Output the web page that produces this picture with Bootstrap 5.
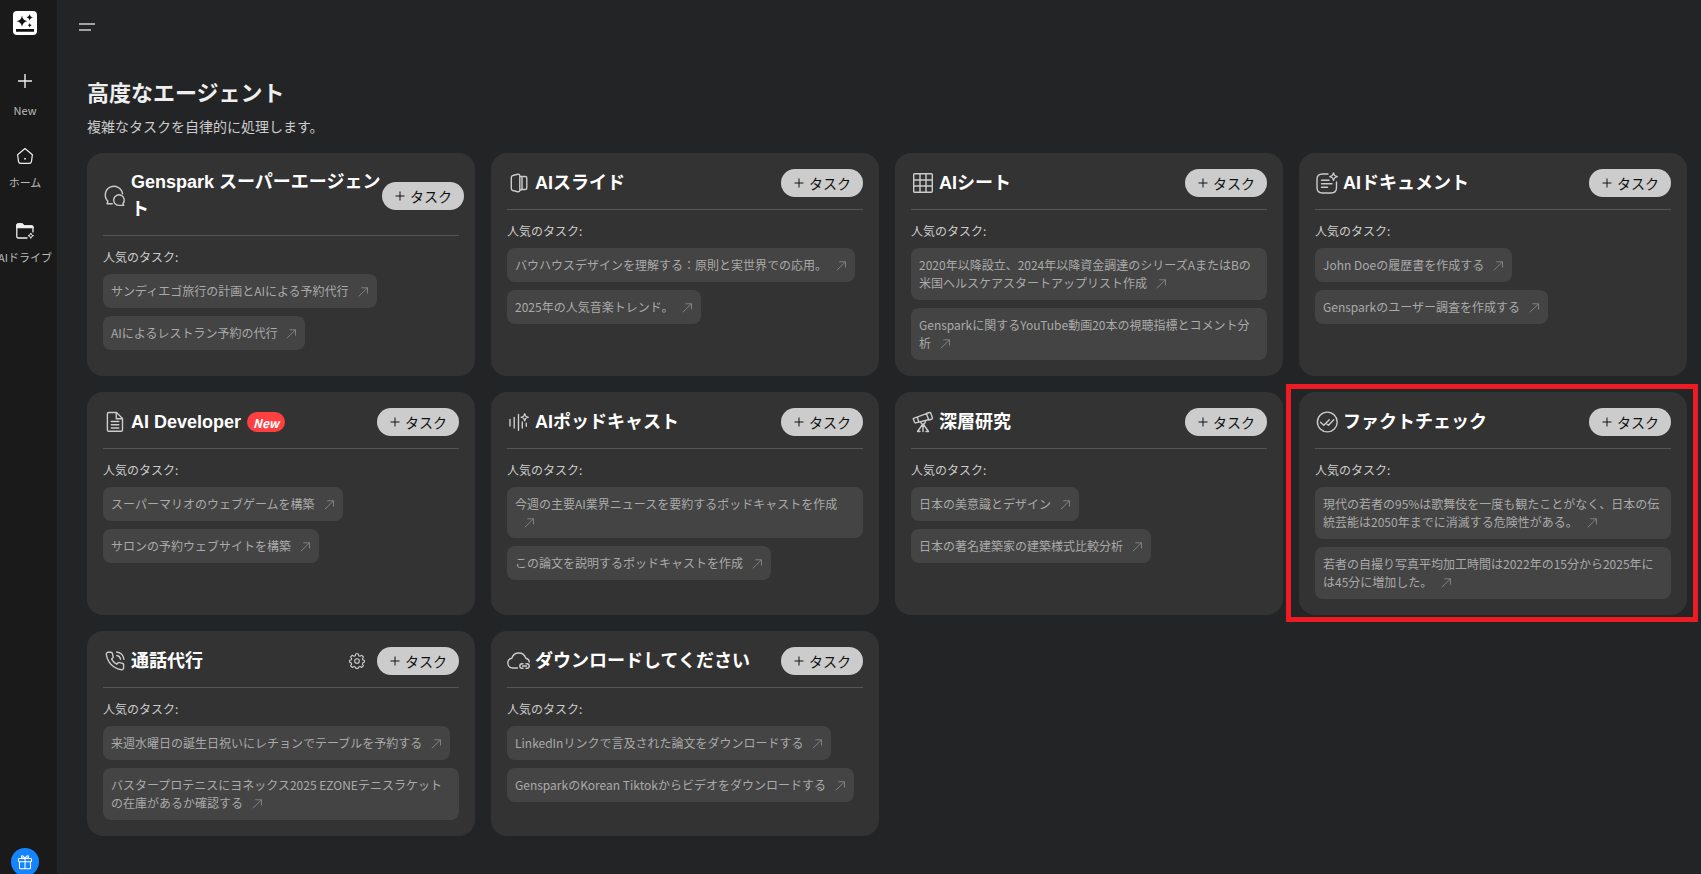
<!DOCTYPE html>
<html lang="ja">
<head>
<meta charset="utf-8">
<meta name="viewport" content="width=device-width, initial-scale=1">
<title>高度なエージェント</title>
<link href="https://cdn.jsdelivr.net/npm/bootstrap@5.3.0/dist/css/bootstrap.min.css" rel="stylesheet">
<style>
  body { background: #232425; color: #eee; font-family: "Noto Sans CJK JP", sans-serif; height: 100vh; overflow: hidden; line-height: 1.5; }
  svg { display: block; fill: none; stroke: currentColor; flex: none; }
  .side { width: 57px; padding: 11px 7px 0 0; background: #1a1a1a; color: #bbb; font-size: 11px; height: 100vh; overflow: hidden; }
  .side-item { height: 75px; line-height: 16px; white-space: nowrap; }
  .side-item svg { color: #eee; margin-bottom: 11px; }
  .side-item .icon-low { margin-bottom: 8px; }
  .side-list { margin-top: 36px; }
  .gift { width: 28px; height: 28px; background: #1484ff; color: #fff; margin-bottom: -2px; flex: none; }
  .page { padding: 22px 14px 0 30px; }
  .menu-icon { margin-left: -8px; color: #ccc; }
  .page h1 { font-size: 22px; line-height: 33px; margin: 43px 0 0; font-weight: 700; }
  .lead-in { font-size: 14px; line-height: 21px; margin: 8px 0 16px; color: #ccc; }
  .agents { display: grid; grid-template-columns: repeat(4, 388px); gap: 16px; }
  .agent { background: #333; border: 0; border-radius: 16px; padding: 16px; color: #ccc; font-size: 12px; line-height: 18px; }
  .agent-head { padding-bottom: 12px; border-bottom: 1px solid #555; margin-bottom: 12px; gap: 4px; min-height: 41px; }
  .agent-head > svg { width: 24px; height: 24px; stroke-width: 1.4; stroke-linecap: round; stroke-linejoin: round; }
  .agent-head h2 { font: 700 18px/27px "Liberation Sans", "Noto Sans CJK JP", sans-serif; color: #fff; margin: 0; }
  .agent-head .title-wrap { width: 251px; flex: none; margin-right: -4px; }
  .btn-task { --bs-btn-color: #111; --bs-btn-bg: #ccc; --bs-btn-padding-x: 12px; --bs-btn-padding-y: 0; --bs-btn-border-width: 0; --bs-btn-font-size: 14px; --bs-btn-line-height: 28px; --bs-btn-hover-bg: #ddd; width: 82px; height: 28px; flex: none; white-space: nowrap; }
  .tasks { gap: 8px; margin-top: 8px; }
  .chip { background: #444; color: #aaa; border-radius: 8px; padding: 8px; }
  .chip svg { display: inline-block; width: 12px; height: 12px; margin-left: 8px; vertical-align: -2px; stroke: #888; }
  .chip-short { height: 51px; }
  .new-tag { background: #ff4040; border-radius: 10px; font: italic 700 12px/20px "Noto Sans CJK JP", sans-serif; width: 38px; height: 20px; padding: 1px 0 0; margin-left: 2px; }
  .gear { margin-right: 8px; }
  .agent-head > svg.gear { width: 16px; height: 16px; stroke-width: 1.1; }
  .marked::after { content: ""; position: absolute; inset: -8px -11px -7px -13px; border: 5px solid #ed1c24; }
</style>
</head>
<body class="d-flex">
<svg width="0" height="0" class="position-absolute">
  <symbol id="arrow" viewBox="0 0 12 12"><path d="M1.800 10.300 10.400 1.900M4.300 1.800h6.200v5.700" stroke-width=".9"/></symbol>
  <symbol id="plus" viewBox="0 0 12 12"><path d="M6 1.500v9M1.500 6h9" stroke-width="1"/></symbol>
</svg>

<aside class="side d-flex flex-column align-items-center flex-shrink-0">
  <svg class="mx-auto" width="24" height="24" viewBox="0 0 24 24"><rect width="24" height="24" rx="4" fill="#fff" stroke="none"/><path fill="#111" stroke="none" d="M9 4.500q.7 5 5.500 5.700q-4.800.7-5.500 5.600q-.7-4.900-5.500-5.600q4.800-.7 5.500-5.700zM16.700 3q.4 3 3.300 3.500q-2.900.4-3.300 3.400q-.4-3-3.300-3.400q2.900-.5 3.300-3.500zM16.700 12q.3 2 2 2.300q-1.700.3-2 2.200q-.3-1.900-2-2.200q1.700-.3 2-2.300zM3 18h18v2.800H3z"/></svg>
  <nav class="side-list d-flex flex-column align-items-center flex-grow-1">
    <div class="side-item d-flex flex-column align-items-center"><svg width="20" height="20" viewBox="0 0 20 20" stroke-width="1.400"><path d="M10 3v14M3 10h14"/></svg>New</div>
    <div class="side-item d-flex flex-column align-items-center"><svg class="icon-low" width="20" height="20" viewBox="0 0 20 20" stroke-width="1.200"><path d="m10 2.500-7.400 6.200.9 6.600q.3 2 2.300 2h8.400q2 0 2.300-2l.9-6.600z" stroke-linejoin="round"/><path d="M10 12v1.500" stroke-width="1.700"/></svg>ホーム</div>
    <div class="side-item d-flex flex-column align-items-center"><svg class="icon-low" width="20" height="20" viewBox="0 0 20 20" stroke-width="1.300"><path d="M12.500 17H3.300q-1.500 0-1.500-1.500v-11Q1.800 3 3.300 3H7l2 2h7.500q1.500 0 1.500 1.500v5"/><path d="M1.800 6.700V4.500Q1.800 3 3.300 3H7l2 2h7.500q1.500 0 1.500 1.700z" fill="currentColor"/><path d="m15.800 12 .8 1.900 1.900.8-1.900.8-.8 1.900-.8-1.900-1.900-.8 1.900-.8z" stroke-width="1"/></svg>AIドライブ</div>
  </nav>
  <div class="gift rounded-circle d-flex justify-content-center align-items-center"><svg width="16" height="16" viewBox="0 0 16 16" stroke-width="1.100"><rect x="1.500" y="4.500" width="13" height="3.200" rx=".8"/><path d="M2.500 7.700v6q0 1 1 1h9q1 0 1-1v-6M8 4.500v10.200M8 4.500q-4 0-3.500-2Q5.500.3 8 4.500q2.500-4.200 3.500-2 .5 2-3.500 2z"/></svg></div>
</aside>

<main class="page flex-grow-1">
  <svg class="menu-icon" width="16" height="10" viewBox="0 0 16 10" stroke-width="1.700"><path d="M0 2h16M0 8h12"/></svg>
  <h1>高度なエージェント</h1>
  <p class="lead-in">複雑なタスクを自律的に処理します。</p>
  <div class="agents">

    <section class="agent card">
      <div class="agent-head d-flex align-items-center">
        <svg viewBox="0 0 24 24"><path d="M19.600 9.800A8.700 8.700 0 1 0 4.900 17.200L4 19.700H9.300"/><path d="M20 19.500a5.300 5.300 0 1 0-4.200 1.900H20.700z"/></svg>
        <h2 class="title-wrap">Genspark スーパーエージェント</h2>
        <button class="btn btn-task rounded-pill d-flex align-items-center gap-1"><svg width="12" height="12"><use href="#plus"/></svg>タスク</button>
      </div>
      <div>人気のタスク:</div>
      <div class="tasks d-flex flex-column align-items-start">
        <div class="chip">サンディエゴ旅行の計画とAIによる予約代行<svg><use href="#arrow"/></svg></div>
        <div class="chip">AIによるレストラン予約の代行<svg><use href="#arrow"/></svg></div>
      </div>
    </section>

    <section class="agent card">
      <div class="agent-head d-flex align-items-center">
        <svg viewBox="0 0 24 24"><path d="M4.300 6.500q0-1.700 1.500-2l5-1.200q2-.3 2 1.500v14.400q0 1.800-2 1.500l-5-1.200q-1.500-.3-1.500-2zM12.800 5.500h5.500q1.500 0 1.500 1.500v10q0 1.500-1.500 1.500h-2.500q-1.500 0-3 .8M15 5.500v13"/></svg>
        <h2>AIスライド</h2>
        <button class="btn btn-task rounded-pill d-flex align-items-center gap-1 ms-auto"><svg width="12" height="12"><use href="#plus"/></svg>タスク</button>
      </div>
      <div>人気のタスク:</div>
      <div class="tasks d-flex flex-column align-items-start">
        <div class="chip">バウハウスデザインを理解する：原則と実世界での応用。<svg><use href="#arrow"/></svg></div>
        <div class="chip">2025年の人気音楽トレンド。<svg><use href="#arrow"/></svg></div>
      </div>
    </section>

    <section class="agent card">
      <div class="agent-head d-flex align-items-center">
        <svg viewBox="0 0 24 24"><rect x="2.700" y="2.700" width="18.600" height="18.600" rx="1"/><path d="M9 3v18M15 3v18M3 9h18M3 15h18"/></svg>
        <h2>AIシート</h2>
        <button class="btn btn-task rounded-pill d-flex align-items-center gap-1 ms-auto"><svg width="12" height="12"><use href="#plus"/></svg>タスク</button>
      </div>
      <div>人気のタスク:</div>
      <div class="tasks d-flex flex-column align-items-start">
        <div class="chip">2020年以降設立、2024年以降資金調達のシリーズAまたはBの米国ヘルスケアスタートアップリスト作成<svg><use href="#arrow"/></svg></div>
        <div class="chip">Gensparkに関するYouTube動画20本の視聴指標とコメント分析<svg><use href="#arrow"/></svg></div>
      </div>
    </section>

    <section class="agent card">
      <div class="agent-head d-flex align-items-center">
        <svg viewBox="0 0 24 24"><path d="M13 3H7.500Q2 3 2 8.500v8Q2 22 7.500 22H16q5.500 0 5.500-5.500V11M6.500 9.300h7.500M6.500 12.700h10.500M6.500 16.200h6"/><path d="m18.500 1.800 1.100 2.700 2.700 1.100-2.700 1.100-1.100 2.700-1.100-2.700-2.700-1.100 2.700-1.100z" stroke-width="1.200"/></svg>
        <h2>AIドキュメント</h2>
        <button class="btn btn-task rounded-pill d-flex align-items-center gap-1 ms-auto"><svg width="12" height="12"><use href="#plus"/></svg>タスク</button>
      </div>
      <div>人気のタスク:</div>
      <div class="tasks d-flex flex-column align-items-start">
        <div class="chip">John Doeの履歴書を作成する<svg><use href="#arrow"/></svg></div>
        <div class="chip">Gensparkのユーザー調査を作成する<svg><use href="#arrow"/></svg></div>
      </div>
    </section>

    <section class="agent card">
      <div class="agent-head d-flex align-items-center">
        <svg viewBox="0 0 24 24"><path d="M5.500 2.500h8l6 6v11.500q0 1.300-1.300 1.300H5.700q-1.300 0-1.300-1.300v-16q0-1.500 1.100-1.500zM13.300 2.700v6h6M8.300 11.500h7.500M8.300 14.700h7.500M8.300 18h7.500"/></svg>
        <h2>AI Developer</h2>
        <span class="badge new-tag">New</span>
        <button class="btn btn-task rounded-pill d-flex align-items-center gap-1 ms-auto"><svg width="12" height="12"><use href="#plus"/></svg>タスク</button>
      </div>
      <div>人気のタスク:</div>
      <div class="tasks d-flex flex-column align-items-start">
        <div class="chip">スーパーマリオのウェブゲームを構築<svg><use href="#arrow"/></svg></div>
        <div class="chip">サロンの予約ウェブサイトを構築<svg><use href="#arrow"/></svg></div>
      </div>
    </section>

    <section class="agent card">
      <div class="agent-head d-flex align-items-center">
        <svg viewBox="0 0 24 24"><path d="M3 9.500v6.500M7.200 7.500v10.500M11.500 4.500v15.800M15.300 12v6M19.300 13.300v3"/><path d="m17.700 3.600 1 2.700 2.700 1-2.700 1-1 2.700-1-2.700-2.700-1 2.700-1z" stroke-width="1.200"/></svg>
        <h2>AIポッドキャスト</h2>
        <button class="btn btn-task rounded-pill d-flex align-items-center gap-1 ms-auto"><svg width="12" height="12"><use href="#plus"/></svg>タスク</button>
      </div>
      <div>人気のタスク:</div>
      <div class="tasks d-flex flex-column align-items-start">
        <div class="chip chip-short">今週の主要AI業界ニュースを要約するポッドキャストを作成<svg><use href="#arrow"/></svg></div>
        <div class="chip">この論文を説明するポッドキャストを作成<svg><use href="#arrow"/></svg></div>
      </div>
    </section>

    <section class="agent card">
      <div class="agent-head d-flex align-items-center">
        <svg viewBox="0 0 24 24"><path d="m2.500 8.300 13-4.600 2.200 6-13 3.200q-.8.200-1.100-.6l-1.300-3.200q-.2-.6.200-.8zM15.300 3.500l3.300-1q.8-.2 1.100.6l1.700 4.700q.3.900-.5 1.200l-3 1M6.300 7.200l1.500 4.800M12 14.500v7M11.500 14.500l-5 7H9M12.500 14.500l5 7H15M9.800 12q.4 2.300 2.200 2.300t2.400-3"/></svg>
        <h2>深層研究</h2>
        <button class="btn btn-task rounded-pill d-flex align-items-center gap-1 ms-auto"><svg width="12" height="12"><use href="#plus"/></svg>タスク</button>
      </div>
      <div>人気のタスク:</div>
      <div class="tasks d-flex flex-column align-items-start">
        <div class="chip">日本の美意識とデザイン<svg><use href="#arrow"/></svg></div>
        <div class="chip">日本の著名建築家の建築様式比較分析<svg><use href="#arrow"/></svg></div>
      </div>
    </section>

    <section class="agent card marked">
      <div class="agent-head d-flex align-items-center">
        <svg viewBox="0 0 24 24"><circle cx="12.300" cy="12" r="9.900"/><path d="m5.500 12.300 3.300 3 5.500-5.600M12 14.200l1.500 1.100 5.300-5.600"/></svg>
        <h2>ファクトチェック</h2>
        <button class="btn btn-task rounded-pill d-flex align-items-center gap-1 ms-auto"><svg width="12" height="12"><use href="#plus"/></svg>タスク</button>
      </div>
      <div>人気のタスク:</div>
      <div class="tasks d-flex flex-column align-items-start">
        <div class="chip">現代の若者の95%は歌舞伎を一度も観たことがなく、日本の伝統芸能は2050年までに消滅する危険性がある。<svg><use href="#arrow"/></svg></div>
        <div class="chip">若者の自撮り写真平均加工時間は2022年の15分から2025年には45分に増加した。<svg><use href="#arrow"/></svg></div>
      </div>
    </section>

    <section class="agent card">
      <div class="agent-head d-flex align-items-center">
        <svg viewBox="0 0 24 24"><path d="M20.600 16.500v2.300a1.900 1.900 0 0 1-2 1.900 17 17 0 0 1-7.500-2.700 16.500 16.500 0 0 1-5.100-5.100A17 17 0 0 1 3.300 5.300a1.900 1.900 0 0 1 1.900-2h2.600a1.700 1.700 0 0 1 1.700 1.500q.2 1.300.6 2.400a1.700 1.700 0 0 1-.4 1.800L8.600 10.100a13.600 13.600 0 0 0 5.100 5.100l1.100-1.100a1.700 1.700 0 0 1 1.800-.4q1.200.4 2.400.6a1.700 1.700 0 0 1 1.600 2.200zM13.800 6.500a4.500 4.500 0 0 1 3.700 3.700M13.700 3a8 8 0 0 1 7.200 7.200"/></svg>
        <h2>通話代行</h2>
        <svg class="gear ms-auto" viewBox="0 0 16 16"><circle cx="8" cy="8" r="2.300"/><path d="M6.800.8h2.400l.5 2 1.300.5 1.800-1 1.600 1.600-1 1.800.5 1.300 1.500.3v1.900l-1.500.6-.5 1.300 1 1.700-1.600 1.600-1.800-1-1.300.5-.5 1.500H6.800l-.5-1.500L5 13.400l-1.800 1-1.600-1.600 1-1.700-.5-1.300-1.500-.6V7.300L2.100 7l.5-1.300-1-1.800 1.600-1.600 1.800 1 1.300-.5z"/></svg>
        <button class="btn btn-task rounded-pill d-flex align-items-center gap-1"><svg width="12" height="12"><use href="#plus"/></svg>タスク</button>
      </div>
      <div>人気のタスク:</div>
      <div class="tasks d-flex flex-column align-items-start">
        <div class="chip">来週水曜日の誕生日祝いにレチョンでテーブルを予約する<svg><use href="#arrow"/></svg></div>
        <div class="chip">バスタープロテニスにヨネックス2025 EZONEテニスラケットの在庫があるか確認する<svg><use href="#arrow"/></svg></div>
      </div>
    </section>

    <section class="agent card">
      <div class="agent-head d-flex align-items-center">
        <svg viewBox="0 0 24 24"><path d="M10.500 19H5.500A4.900 4.900 0 0 1 4.800 9.300 7.300 7.300 0 0 1 18.800 9.300Q22 10 22.300 13"/><path d="M16 14.800h-1a2.200 2.200 0 0 0 0 4.400h1M19 14.800h1a2.200 2.200 0 0 1 0 4.400h-1M15.500 17h4"/></svg>
        <h2>ダウンロードしてください</h2>
        <button class="btn btn-task rounded-pill d-flex align-items-center gap-1 ms-auto"><svg width="12" height="12"><use href="#plus"/></svg>タスク</button>
      </div>
      <div>人気のタスク:</div>
      <div class="tasks d-flex flex-column align-items-start">
        <div class="chip">LinkedInリンクで言及された論文をダウンロードする<svg><use href="#arrow"/></svg></div>
        <div class="chip">GensparkのKorean Tiktokからビデオをダウンロードする<svg><use href="#arrow"/></svg></div>
      </div>
    </section>
  </div>
</main>
<script src="https://cdn.jsdelivr.net/npm/bootstrap@5.3.0/dist/js/bootstrap.bundle.min.js"></script>
</body>
</html>
